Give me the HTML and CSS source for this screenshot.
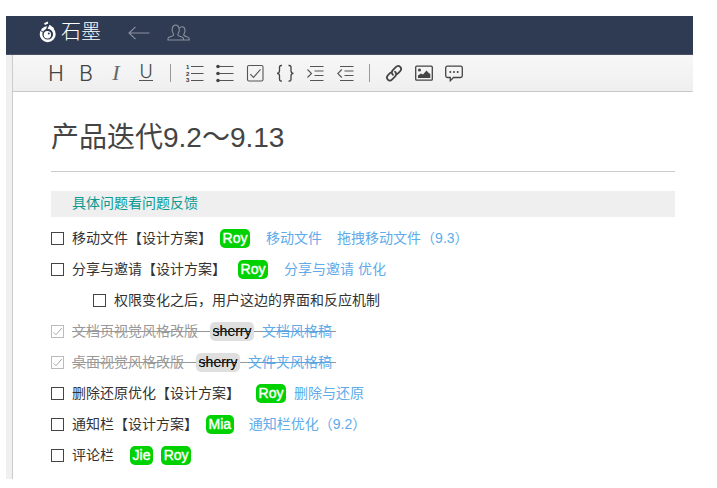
FILE: index.html
```
<!DOCTYPE html>
<html lang="zh-CN">
<head>
<meta charset="utf-8">
<title>石墨</title>
<link rel="stylesheet" href="styles.css">
</head>
<body>
<div class="app">
  <header class="topbar">
    <svg class="logo" width="18" height="22" viewBox="0 0 18 22"><circle cx="8.7" cy="13.2" r="6.700" fill="none" stroke="#fff" stroke-width="2.600"/><circle cx="8.400" cy="13.800" r="3.700" fill="#fff"/><path d="M5.500 3.200 9 1.500M10 4.500 14.500 8" stroke="#fff" stroke-width="2"/><path d="M10 2.400 7.500 9" stroke="#2f3b52" stroke-width="1.400"/><path d="M0 8.500 4 11" stroke="#2f3b52" stroke-width="1"/><circle cx="9.800" cy="12.600" r="1" fill="#2f3b52"/></svg>
    <span class="brand">石墨</span>
    <svg class="back" width="22" height="14" viewBox="0 0 22 14"><path d="M21.500 7H1M7.500.8 1 7l6.500 6.200"/></svg>
    <svg class="people" width="24" height="18" viewBox="0 0 24 18"><path d="M1 16v-1.700c0-1.500 4.500-1.800 5.300-2.800.8-.9.300-1.700-.4-2.700C4.500 6.800 4.800 1 8.700 1s4.200 5.800 2.800 7.800c-.7 1-1.200 1.800-.4 2.700.8 1 5.300 1.300 5.300 2.800V16zM12.500 4c.6-.9 1.400-1.300 2.500-1.300 3.400 0 3.500 4.800 2.300 6.500-.6.900-1 1.600-.3 2.300.9.900 5.200 1.400 5.200 2.900V16h-5.800"/></svg>
  </header>
  <div class="body">
    <div class="gutter"></div>
    <main class="main">
      <nav class="toolbar">
        <span class="tool">H</span>
        <span class="tool">B</span>
        <span class="tool italic">I</span>
        <span class="tool"><span class="under">U</span></span>
        <span class="sep"></span>
        <svg class="icon" width="30" height="20" viewBox="0 0 30 20"><g class="digits"><text x="6" y="5.800">1</text><text x="6" y="12.800">2</text><text x="6" y="19.300">3</text></g><path d="M11 3.500h12.500M11 10.500h12.500M11 17.500h12.500"/></svg>
        <svg class="icon" width="30" height="20" viewBox="0 0 30 20"><path d="M8 3.500h15.500M8 10.500h15.500M8 17.500h15.500"/><g class="solid"><circle cx="8" cy="3.500" r="1.800"/><circle cx="8" cy="10.500" r="1.800"/><circle cx="8" cy="17.500" r="1.800"/></g></svg>
        <svg class="icon" width="30" height="20" viewBox="0 0 30 20"><rect x="7.500" y="2.500" width="15.500" height="15.500" rx="1.500"/><path d="m10.300 11.200 3.200 3.200 7-8"/></svg>
        <svg class="icon" width="30" height="20" viewBox="0 0 30 20"><path class="brace" d="M12 2.500h-.8Q9.500 2.500 9.500 4.500v3.300Q9.500 10.300 7 10.300q2.500 0 2.500 2.500v3.300q0 2 1.700 2h.8M18.500 2.500h.8q1.700 0 1.700 2v3.300q0 2.500 2.500 2.500-2.500 0-2.500 2.500v3.300q0 2-1.700 2h-.8"/></svg>
        <svg class="icon" width="30" height="20" viewBox="0 0 30 20"><path d="M10 3.500h13.500M14.500 8h9M14.500 12.500h9M10 17.500h13.500"/><path d="m7.500 6.500 4 4-4 4"/></svg>
        <svg class="icon" width="30" height="20" viewBox="0 0 30 20"><path d="M10 3.500h13.500M14.500 8h9M14.500 12.500h9M10 17.500h13.500"/><path d="m11.800 6.500-4 4 4 4"/></svg>
        <span class="sep"></span>
        <svg class="icon" width="30" height="20" viewBox="0 0 30 20"><path class="chain" d="M14 11.800c-2-2-1.300-3.600-.2-4.700l3-3c1.500-1.500 3.400-1.200 4.400-.2s1.300 2.900-.2 4.400l-2.500 2.500M16 8.700c2 2 1.300 3.600.2 4.700l-3 3c-1.500 1.500-3.400 1.200-4.400.2s-1.300-2.900.2-4.400l2.500-2.500"/></svg>
        <svg class="icon" width="30" height="20" viewBox="0 0 30 20"><rect class="frame" x="6.700" y="3.200" width="16.600" height="14" rx="1"/><g class="solid"><circle cx="10.500" cy="7" r="1.500"/><path d="M9 15v-2.500l3-2 2 1 3.500-4 2 2.300 1.800 1.200v4z"/></g></svg>
        <svg class="icon" width="30" height="20" viewBox="0 0 30 20"><path class="bubble" d="M8.500 3.200h13q1.800 0 1.800 1.800v7.700q0 1.800-1.800 1.800h-7l-3.200 3.200v-3.200H8.500q-1.800 0-1.800-1.800V5q0-1.800 1.800-1.800z"/><g class="solid"><circle cx="11.300" cy="8.900" r="1"/><circle cx="15" cy="8.900" r="1"/><circle cx="18.700" cy="8.900" r="1"/></g></svg>
      </nav>
      <article class="doc">
        <h1 class="title">产品迭代9.2～9.13</h1>
        <p class="note">具体问题看问题反馈</p>
        <ul class="list">
          <li class="item"><i class="box"></i><span>移动文件【设计方案】</span><b class="tag gap8">Roy</b><a class="gap16">移动文件</a><a class="gap15">拖拽移动文件（9.3）</a></li>
          <li class="item"><i class="box"></i><span>分享与邀请【设计方案】</span><b class="tag gap12">Roy</b><a class="gap16">分享与邀请 优化</a></li>
          <li class="item nested"><i class="box"></i><span>权限变化之后，用户这边的界面和反应机制</span></li>
          <li class="item done"><i class="box"><svg width="11" height="11" viewBox="0 0 11 11"><path d="m1.500 6.300 2.500 2.500L9.800 2"/></svg></i><span class="text narrow">文档页视觉风格改版<b class="tag muted">sherry</b><a>文档风格稿</a></span></li>
          <li class="item done"><i class="box"><svg width="11" height="11" viewBox="0 0 11 11"><path d="m1.500 6.300 2.500 2.500L9.800 2"/></svg></i><span class="text">桌面视觉风格改版<b class="tag muted">sherry</b><a>文件夹风格稿</a></span></li>
          <li class="item"><i class="box"></i><span>删除还原优化【设计方案】</span><b class="tag gap16">Roy</b><a class="gap8">删除与还原</a></li>
          <li class="item"><i class="box"></i><span>通知栏【设计方案】</span><b class="tag gap8">Mia</b><a class="gap15">通知栏优化（9.2）</a></li>
          <li class="item"><i class="box"></i><span>评论栏</span><b class="tag gap16">Jie</b><b class="tag gap8">Roy</b></li>
        </ul>
      </article>
    </main>
  </div>
</div>
</body>
</html>
```

FILE: styles.css
```
* { box-sizing: border-box; }
body {
  margin: 0;
  padding: 16px 24px 9px 6px;
  background: #fff;
  color: #333;
  font: 14px/31px "Liberation Sans", "Noto Sans CJK SC", sans-serif;
}
.app { height: 463px; overflow: hidden; }
.topbar {
  display: flex;
  height: 39px;
  background: #2f3b52;
  border-bottom: 1px solid #4a5262;
}
.logo { margin: 5px 0 0 33px; }
.brand {
  margin: 4px 0 0 4px;
  color: #fff;
  font-family: "Noto Sans CJK SC", sans-serif;
  font-size: 20px;
  font-weight: 300;
  line-height: 22px;
  width: 40px;
}
.back, .people { fill: none; stroke: #8b929f; stroke-width: 1.1; }
.back { margin: 10px 0 0 27px; }
.people { margin: 8px 0 0 17px; }
.body { display: flex; height: 424px; }
.gutter { width: 7px; background: #f0f0f0; border-right: 1px solid #ccc; }
.main { flex: 1; }
.toolbar {
  display: flex;
  align-items: center;
  height: 37px;
  padding: 0 0 1px 28px;
  background: linear-gradient(#f7f7f7, #efefef);
  border-bottom: 1px solid #c8c8c8;
}
.tool {
  width: 30px;
  color: #444;
  text-align: center;
  font: 300 21.500px/24px Inter, sans-serif;
}
.italic { font: italic 300 22px/24px "Liberation Serif", serif; color: #666; }
.under {
  display: inline-block;
  height: 16px;
  margin-top: 4px;
  border-bottom: 1px solid #555;
  font-size: 18px;
  line-height: 14px;
  vertical-align: top;
}
.sep { width: 1px; height: 18px; margin: 0 9px; background: #999; }
.icon { fill: none; stroke: #555; stroke-width: 1.1; flex: none; }
.solid { fill: #444; stroke: none; }
.digits { fill: #333; stroke: none; font: bold 6px "Liberation Sans", sans-serif; }
.chain { stroke: #444; stroke-width: 1.700; stroke-linecap: round; }
.brace, .frame, .bubble { stroke: #444; stroke-width: 1.300; }
.doc { padding: 0 18px 0 38px; }
.title {
  height: 80px;
  margin: 0;
  border-bottom: 1px solid #ccc;
  color: #444;
  font-size: 28px;
  font-weight: 400;
  line-height: 92px;
}
.note {
  height: 26px;
  margin: 19px 0 6px;
  padding-left: 21px;
  background: #efefef;
  color: #099a94;
  line-height: 25px;
}
.list { margin: 0; padding: 0; list-style: none; }
.item { display: flex; align-items: center; height: 31px; white-space: pre; }
.nested { padding-left: 42px; }
.box { flex: none; width: 13px; height: 13px; margin-right: 8px; border: 1px solid #444; }
.box svg { display: block; fill: none; stroke: #aaa; }
.item a { color: #60abe9; }
.tag {
  height: 19px;
  padding: 0 2.600px;
  border-radius: 5px;
  background: #00d200;
  color: #fff;
  font-weight: 400;
  line-height: 19px;
  -webkit-text-stroke: .4px;
}
.done { color: #999; }
.done .box { border-color: #bbb; }
.text { display: flex; align-items: center; position: relative; padding-right: 4px; }
.text::before, .text a::after, .muted::after {
  content: "";
  position: absolute;
  left: 0;
  right: 0;
  top: 15px;
  height: 1px;
  background: #999;
}
.text a { position: relative; }
.text a::after { background: #60a0d4; }
.muted {
  position: relative;
  margin: 0 8px 0 12px;
  background: #dfdfdf;
  color: #000;
  -webkit-text-stroke: .1px;
}
.muted::after { left: 3px; right: 3px; top: 9px; background: #222; }
.gap8 { margin-left: 8px; }
.gap12 { margin-left: 12px; }
.gap15 { margin-left: 15px; }
.gap16 { margin-left: 16px; }
```
